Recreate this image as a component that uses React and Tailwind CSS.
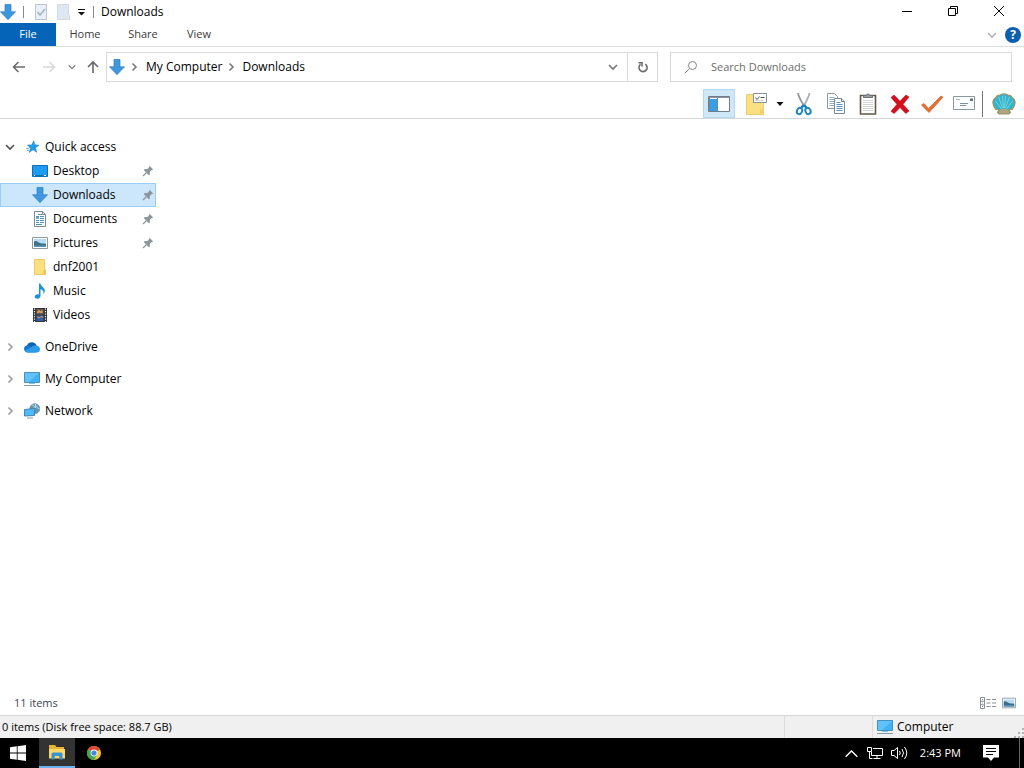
import React, { useState } from 'react';

const DownArrowIcon = ({ className }) => (
  <svg viewBox="0 0 16 16" className={className} aria-hidden="true">
    <path d="M5 .5h6v7.300h4.500L8 15.700.5 7.800H5z" fill="#3f97dd" stroke="#2c7cc0" strokeWidth=".7" />
  </svg>
);

const Chevron = ({ direction = 'right', className }) => {
  const paths = {
    right: 'M3.500 1.500 7 5 3.500 8.500',
    down: 'M1 3l4 4 4-4',
    up: 'M.5 7.500 5 3l4.500 4.500',
  };
  return (
    <svg viewBox="0 0 10 10" className={className} fill="none" stroke="currentColor" aria-hidden="true">
      <path d={paths[direction]} strokeWidth={direction === 'up' ? 1.1 : 1.6} />
    </svg>
  );
};

const MonitorIcon = ({ className }) => (
  <svg viewBox="0 0 16 16" className={className} aria-hidden="true">
    <path d="M.5 1.500h15v10H.5z" fill="#43b2f6" stroke="#4590bd" />
    <path d="M1 2h14L5 11H1z" fill="#62c2fa" />
    <path d="M5 12.500h6" stroke="#7fc3e8" />
    <path d="M0 14.500h16" stroke="#8b9aa5" />
  </svg>
);

const PictureIcon = ({ className }) => (
  <svg viewBox="0 0 16 16" className={className} aria-hidden="true">
    <path d="M.5 2.500h15v11H.5z" fill="#fff" stroke="#8d989f" />
    <path d="M2 4h12v8H2z" fill="#b5dcf2" />
    <path d="M2 6.500c2-1.500 4 .5 6 1.500s4 0 6 1v3H2z" fill="#3f7088" />
    <path d="M2 10.500h12V12H2z" fill="#5796bd" />
  </svg>
);

const PinIcon = () => (
  <svg viewBox="0 0 12 12" className="size-3 text-[#8b959d]" aria-hidden="true">
    <path d="M7.500.8 11.200 4.500l-1.400.4-2 2 .1 2.500-1 .9L1.700 5.100l.9-1 2.500.1 2-2z" fill="currentColor" />
    <path d="M4.500 7.500 1 11" stroke="currentColor" strokeWidth="1.200" />
  </svg>
);

const StarIcon = () => (
  <svg viewBox="0 0 16 16" className="size-4" aria-hidden="true">
    <path d="m8.800 1.800 1 4 4.200.4-3.500 2.600 1.200 4.500-3.700-2.600L4.200 13.500l1.300-4.300L2.500 6l4.100-.1z" fill="#1f9cea" stroke="#2d89c4" strokeWidth=".6" />
    <path d="M1 9.500h3M2 11.500h2" stroke="#69b9ea" />
  </svg>
);

const DesktopIcon = () => (
  <svg viewBox="0 0 16 16" className="size-4" aria-hidden="true">
    <path d="M.5 2.500h15v11H.5z" fill="#1d9bf0" stroke="#0c70b8" />
    <path d="M1 12.500h14" stroke="#0d6fb4" />
    <path d="M2 12.500h1M12 12.500h2" stroke="#fff" />
  </svg>
);

const DocumentIcon = () => (
  <svg viewBox="0 0 16 16" className="size-4" aria-hidden="true">
    <path d="M2.500.5h8l3 3v12h-11z" fill="#fff" stroke="#82898e" />
    <path d="M10.500.5v3h3" fill="none" stroke="#82898e" />
    <path d="M6 3.500h4M4 5.500h3M8 5.500h4M8 7.500h4M4 9.500h3M8 9.500h4M4 11.500h3M8 11.500h4M4 13.500h6" stroke="#4a95b8" />
    <path d="M4 6h3v2H4z" fill="#6aa9c6" />
  </svg>
);

const FolderIcon = () => (
  <svg viewBox="0 0 16 16" className="size-4" aria-hidden="true">
    <path d="M2.500.5h10v9l1 1v5h-11z" fill="#fcdf7e" stroke="#eccb6c" />
    <path d="M11.500 11v4.500h2v-5z" fill="#f0c04c" />
  </svg>
);

const MusicIcon = () => (
  <svg viewBox="0 0 16 16" className="size-4" aria-hidden="true">
    <path d="M7 .5h1.500c.2 3 4.700 4 4.300 7.500-.1 1.300-.7 2.300-1.400 3 .5-2.400-.3-4-2.900-4.700V13c0 1.600-1.500 2.700-3.200 2.700-1.500 0-2.600-.8-2.600-2s1.300-2.400 3-2.400c.5 0 .9.100 1.300.2z" fill="#1a93dc" />
  </svg>
);

const VideoIcon = () => (
  <svg viewBox="0 0 16 16" className="size-4" aria-hidden="true">
    <path d="M1 1h14v14H1z" fill="#30323a" />
    <path d="M2.500 1.500v14M13.500 1.500v14" stroke="#f3f3f3" strokeWidth="1.200" strokeDasharray="1.300 1.200" />
    <path d="M4.500 2h7v5.500h-7z" fill="#6d5a4c" />
    <path d="m5 5 2-2 1.500 1.500L10 3l1 2.500-2 .5-2-.5-2 1z" fill="#e2a55e" />
    <path d="M4.500 8.500h7V14h-7z" fill="#375fa8" />
    <path d="m5 9.500 2 1.500 3-2 1 2" stroke="#d49a55" fill="none" />
  </svg>
);

const CloudIcon = () => (
  <svg viewBox="0 0 16 16" className="size-4" aria-hidden="true">
    <path d="M3 6.500a5.200 5.200 0 0 1 9.700.3L9 11l-6-2z" fill="#0f62b4" />
    <path d="M3.800 13.500C-1 13.500-1.200 6.800 3.200 6.300c1.800-.1 2.800.7 4 1.500L12 13.500z" fill="#1679cf" />
    <path d="M7 8.500c2-2 4-2.300 5.800-1.700 2.100.3 3.200 1.700 3.200 3.400 0 2-1.300 3.300-3.100 3.300H3.500c-1.300 0-2.300-.6-2.800-1.500z" fill="#2b9bea" />
  </svg>
);

const NetworkIcon = () => (
  <svg viewBox="0 0 16 16" className="size-4" aria-hidden="true">
    <circle cx="10.800" cy="5.700" r="5" fill="#6296b4" stroke="#65879b" strokeWidth=".6" />
    <path d="M8 2c2 0 3 1 2 2.500M13 2.500c-1 2 1 3 2.500 3M11.500 1v4" stroke="#b6ddec" fill="none" />
    <path d="m.5 6.500 10-1v7l-10 .5z" fill="#50b9f7" stroke="#3d86b6" />
    <path d="M3 15h6" stroke="#78a4bd" />
  </svg>
);

// Toolbar icons
const PaneIcon = () => (
  <svg viewBox="0 0 24 24" className="size-6" aria-hidden="true">
    <path d="M1.500 4.500h21v15h-21z" fill="#fff" stroke="#707d89" />
    <path d="M1.500 5.500h21" stroke="#8793a0" />
    <path d="M3 7h7v12H3z" fill="#3c9ce6" />
    <path d="M2.500 6v13M10.500 6v13" stroke="#5d8cb2" />
  </svg>
);

const FolderOptionsIcon = () => (
  <svg viewBox="0 0 24 24" className="size-6" aria-hidden="true">
    <path d="M1.500 2.500h10v6h7v14h-17z" fill="#fbe082" stroke="#ebce75" />
    <path d="M15 17.500h4v5h-4z" fill="#f5d067" />
    <path d="M8.500 1.500h13v9h-13z" fill="#fff" stroke="#8b9297" />
    <path d="m10.500 5.500 1.500 2L14.500 4.500M15.500 5.500h4" fill="none" stroke="#5a5a5a" />
    <path d="M10.500 8.500h8" stroke="#d1d5d8" />
  </svg>
);

const CutIcon = () => (
  <svg viewBox="0 0 24 24" className="size-6" fill="none" aria-hidden="true">
    <path d="M6 1c.2 3 3.300 8.500 6.500 13.500" stroke="#8c969e" strokeWidth="1.800" />
    <path d="M17.500 1c-.2 3-3.300 8.500-6 13.500" stroke="#a6afb6" strokeWidth="1.800" />
    <path d="m11.700 13-2.700 3M12 13l2.700 3" stroke="#1a7ebd" strokeWidth="2.500" />
    <ellipse cx="7.500" cy="19" rx="2.500" ry="3.200" transform="rotate(25 7.500 19)" stroke="#1d86c4" strokeWidth="2" />
    <ellipse cx="16" cy="19" rx="2.500" ry="3.200" transform="rotate(-25 16 19)" stroke="#1d86c4" strokeWidth="2" />
  </svg>
);

const CopyIcon = () => (
  <svg viewBox="0 0 24 24" className="size-6" aria-hidden="true">
    <path d="M3.500 1.500h7l3 3v12h-10z" fill="#fff" stroke="#8c979f" />
    <path d="M5.500 5.500h5M5.500 7.500h5M5.500 9.500h5M5.500 11.500h5M5.500 13.500h5" stroke="#8fb1cb" />
    <path d="M10.500 6.500h7l3 3v12h-10z" fill="#fff" stroke="#7a8a99" />
    <path d="M17.500 6.500v3h3" fill="#d8e5ef" stroke="#6c7d8d" />
    <path d="M12.500 10.500h4M12.500 12.500h6M12.500 14.500h6M12.500 16.500h6M12.500 18.500h6" stroke="#5b93c1" />
  </svg>
);

const PasteIcon = () => (
  <svg viewBox="0 0 24 24" className="size-6" aria-hidden="true">
    <path d="M4.500 3.500h15v18.500h-15z" fill="#fff" stroke="#625846" strokeWidth="1.600" />
    <path d="M7 8.500h10M7 10.500h10M7 12.500h10M7 14.500h10M7 16.500h10M7 18.500h10" stroke="#d0d6d9" />
    <path d="M7.500 5.500v-2h3a1.500 1.500 0 0 1 3 0h3v2z" fill="#9aa2a7" stroke="#6a7278" />
  </svg>
);

const DeleteIcon = () => (
  <svg viewBox="0 0 24 24" className="size-6" aria-hidden="true">
    <path d="M3 5.500 6 3l6 6.200L18 3l3 2-6 7.300 6 6.700-3.200 2.500-5.800-6-5.800 6L3 19.300l6-7z" fill="#d4101f" stroke="#b80b18" strokeWidth=".6" />
  </svg>
);

const CheckIcon = () => (
  <svg viewBox="0 0 24 24" className="size-6" aria-hidden="true">
    <path d="m1.500 13 2.500-1.500 4.500 5L21 4l2 1.200L9 20.500z" fill="#ec6f2d" stroke="#c65f2b" strokeWidth=".7" />
  </svg>
);

const MailIcon = () => (
  <svg viewBox="0 0 24 24" className="size-6" aria-hidden="true">
    <path d="M1.500 4.500h21v13h-21z" fill="#fafcfd" stroke="#8b979f" />
    <path d="M4 7.500h4" stroke="#b0bac1" />
    <path d="M18 6.500h3v2.500h-3z" fill="#62747f" />
    <path d="M8 11.500h8M8 13.500h6" stroke="#82909a" />
  </svg>
);

const ShellIcon = () => (
  <svg viewBox="0 0 24 24" className="size-6" aria-hidden="true">
    <path d="M7 17.500H4C-.5 13 .3 7.500 3.500 6c.8-2 2.500-3 4.500-3 2.300-1.500 5.700-1.500 8 0 2 0 3.700 1 4.500 3 3.200 1.500 4 7-.5 11.500h-3l1.500 3-1.500 1.500H7L5.500 20.500z" fill="#35b5cc" stroke="#a98d5f" strokeWidth="1.100" />
    <path d="m9.500 17-6-8M10.500 16l-4-11M11.500 16 10.500 4M12.500 16l1-12M13.500 16l4-11M14.500 17l6-8" stroke="#6ed3dd" fill="none" />
    <path d="M7.500 19c2-3 7-3 9 0l1 1-1 1.500h-9l-1-1.500z" fill="#b8a477" />
  </svg>
);

const quickAccess = [
  { name: 'Desktop', icon: <DesktopIcon />, pinned: true },
  { name: 'Downloads', icon: <DownArrowIcon className="size-4" />, pinned: true },
  { name: 'Documents', icon: <DocumentIcon />, pinned: true },
  { name: 'Pictures', icon: <PictureIcon className="size-4" />, pinned: true },
  { name: 'dnf2001', icon: <FolderIcon /> },
  { name: 'Music', icon: <MusicIcon /> },
  { name: 'Videos', icon: <VideoIcon /> },
];

const roots = [
  { name: 'OneDrive', icon: <CloudIcon /> },
  { name: 'My Computer', icon: <MonitorIcon className="size-4" /> },
  { name: 'Network', icon: <NetworkIcon /> },
];

const tools = [
  { name: 'Cut', icon: <CutIcon /> },
  { name: 'Copy', icon: <CopyIcon /> },
  { name: 'Paste', icon: <PasteIcon /> },
  { name: 'Delete', icon: <DeleteIcon /> },
  { name: 'Rename', icon: <CheckIcon /> },
  { name: 'Properties', icon: <MailIcon /> },
];

const TitleBar = () => (
  <header className="flex h-[23px] items-center">
    <DownArrowIcon className="size-4" />
    <span className="ml-[7px] h-3 w-px bg-[#8a8a8a]" />
    <button aria-label="Properties" className="ml-[9px]">
      <svg viewBox="0 0 16 16" className="size-4">
        <path d="M2.500.5h11v15h-11z" fill="#e9f0f7" stroke="#bcc5ce" />
        <path d="m4.500 8 2.500 3 5-6" fill="none" stroke="#a0b4ca" strokeWidth="1.600" />
      </svg>
    </button>
    <button aria-label="New folder" className="ml-[7px]">
      <svg viewBox="0 0 16 16" className="size-4">
        <path d="M1.500.5h11v10l1 1v4h-12z" fill="#dfe8f0" stroke="#d0dae4" />
      </svg>
    </button>
    <button aria-label="Customize Quick Access Toolbar" className="ml-1">
      <svg viewBox="0 0 12 12" className="size-3">
        <path d="M2 3.500h7" stroke="#111" />
        <path d="M2 6h7L5.500 9.500z" fill="#111" />
      </svg>
    </button>
    <span className="ml-[5px] h-3 w-px bg-[#8a8a8a]" />
    <h1 className="ml-[7px]">Downloads</h1>
    <div className="ml-auto flex h-full items-center pr-[2px] pb-[2px]">
      <button aria-label="Minimize" className="flex w-[46px] justify-center">
        <svg viewBox="0 0 10 10" className="size-[10px]"><path d="M0 5.500h10" stroke="#000" /></svg>
      </button>
      <button aria-label="Restore" className="flex w-[46px] justify-center">
        <svg viewBox="0 0 10 10" className="size-[10px]" fill="none" stroke="#000">
          <path d="M.5 2.500h7v7h-7zM2.500 2.500v-2h7v7h-2" />
        </svg>
      </button>
      <button aria-label="Close" className="flex w-[46px] justify-center">
        <svg viewBox="0 0 10 10" className="size-[10px]" stroke="#000"><path d="m0 0 10 10M10 0 0 10" /></svg>
      </button>
    </div>
  </header>
);

const Ribbon = () => (
  <nav className="flex h-6 items-stretch border-b border-[#dcdddd] text-[11px] text-[#3b3b3b]">
    <button className="w-14 bg-[#0563b8] text-white">File</button>
    <button className="w-[58px]">Home</button>
    <button className="w-[58px]">Share</button>
    <button className="w-[54px]">View</button>
    <div className="ml-auto flex items-center gap-2 pr-[3px]">
      <button aria-label="Expand the Ribbon"><Chevron direction="down" className="size-[10px] text-[#b3b3b3]" /></button>
      <button aria-label="Help" className="flex size-4 items-center justify-center rounded-full bg-[#0c5eb0] text-xs font-bold text-white">
        ?
      </button>
    </div>
  </nav>
);

const AddressRow = () => (
  <div className="flex items-center pt-[5px] pr-3 text-[#6a6a6a]">
    <div className="flex w-[106px] shrink-0 items-center pl-3">
      <button aria-label="Back">
        <svg viewBox="0 0 14 14" className="size-[14px]" fill="none" stroke="currentColor" strokeWidth="1.600"><path d="M6.500 2 1.500 7l5 5M1.500 7H13" /></svg>
      </button>
      <button aria-label="Forward" className="ml-4 text-[#d8d8d8]">
        <svg viewBox="0 0 14 14" className="size-[14px]" fill="none" stroke="currentColor" strokeWidth="1.600"><path d="m7.500 2 5 5-5 5M12.500 7H1" /></svg>
      </button>
      <button aria-label="Recent locations" className="ml-3">
        <Chevron direction="down" className="size-2 text-[#7a7a7a]" />
      </button>
      <button aria-label="Up" className="ml-[10px]">
        <svg viewBox="0 0 14 14" className="size-[14px]" fill="none" stroke="currentColor" strokeWidth="1.600"><path d="m2 7 5-5 5 5M7 2v11" /></svg>
      </button>
    </div>
    <div className="flex h-[30px] flex-1 items-center border border-[#d9d9d9] text-black">
      <DownArrowIcon className="ml-[2px] size-4" />
      <Chevron className="ml-1 size-[10px] text-[#7a7a7a]" />
      <button className="ml-[7px]">My Computer</button>
      <Chevron className="ml-1 size-[10px] text-[#7a7a7a]" />
      <button className="ml-[6px]">Downloads</button>
      <button aria-label="Previous locations" className="ml-auto px-[9px]">
        <Chevron direction="down" className="size-[10px] text-[#757575]" />
      </button>
      <button aria-label="Refresh" className="flex h-full w-[30px] items-center justify-center border-l border-[#d9d9d9] text-[#6c6c6c]">
        <svg viewBox="0 0 12 12" className="size-3" fill="none" stroke="currentColor" strokeWidth="1.600">
          <path d="M8.300 3.100A4.100 4.100 0 1 1 3.500 3.300" />
          <path d="M1.500 1.800H5V5.500" />
        </svg>
      </button>
    </div>
    <label className="ml-3 flex h-[30px] w-[342px] items-center border border-[#d9d9d9] pl-[13px]">
      <svg viewBox="0 0 14 14" className="size-[14px]" fill="none" stroke="#858585">
        <circle cx="8.500" cy="5.500" r="4" />
        <path d="M5.600 8.400.8 13.200" />
      </svg>
      <input
        type="search"
        aria-label="Search Downloads"
        placeholder="Search Downloads"
        className="ml-[13px] min-w-0 flex-1 text-[11px] outline-none placeholder:text-[#6d6d6d]"
      />
    </label>
  </div>
);

const Toolbar = () => (
  <div role="toolbar" className="mt-[7px] flex h-[30px] items-center justify-end border-b border-[#d5d8da] pr-2">
    <button aria-label="Navigation pane" className="mr-1 flex h-[29px] w-8 items-center justify-center border border-[#b4d8f1] bg-[#d0e7f8]">
      <PaneIcon />
    </button>
    <button aria-label="Folder options" className="flex w-[33px] items-center pl-[6px]"><FolderOptionsIcon /></button>
    <button aria-label="More folder options" className="flex w-4 justify-center">
      <svg viewBox="0 0 8 8" className="size-2"><path d="M.5 2h7L4 6z" fill="#111" /></svg>
    </button>
    {tools.map((tool) => (
      <button key={tool.name} aria-label={tool.name} className="flex w-8 justify-center">{tool.icon}</button>
    ))}
    <span className="ml-[2px] h-[26px] w-px bg-[#777]" />
    <button aria-label="Classic Shell" className="ml-[9px]"><ShellIcon /></button>
  </div>
);

const Sidebar = ({ selected, onSelect }) => (
  <aside className="w-[156px] shrink-0 pt-4">
    <button className="flex h-6 w-full items-center pl-[5px]">
      <Chevron direction="down" className="size-[10px] text-[#505050]" />
      <span className="ml-[10px]"><StarIcon /></span>
      <span className="ml-1">Quick access</span>
    </button>
    <ul>
      {quickAccess.map((item) => (
        <li key={item.name}>
          <button
            onClick={() => onSelect(item.name)}
            className={`flex h-6 w-full items-center border pr-px pl-[31px] ${
              selected === item.name ? 'border-[#99cdf5] bg-[#cce7fc]' : 'border-transparent'
            }`}
          >
            {item.icon}
            <span className="mr-auto ml-[5px]">{item.name}</span>
            {item.pinned && <PinIcon />}
          </button>
        </li>
      ))}
    </ul>
    <ul className="mt-2 flex flex-col gap-2">
      {roots.map((item) => (
        <li key={item.name}>
          <button className="flex h-6 w-full items-center pl-[5px]">
            <Chevron className="size-[10px] text-[#9b9b9b]" />
            <span className="ml-[9px]">{item.icon}</span>
            <span className="ml-[5px]">{item.name}</span>
          </button>
        </li>
      ))}
    </ul>
  </aside>
);

const StatusBars = () => (
  <footer>
    <div className="flex h-6 items-center pr-2 pl-[14px] text-[#3b4652]">
      <span className="text-[11px]">11 items</span>
      <button aria-label="Details view" className="ml-auto">
        <svg viewBox="0 0 16 12" className="h-3 w-4" fill="none" stroke="#8a9095">
          <path d="M.5.5h4v11h-4zM.5 4.200h4M.5 7.800h4M2 2.500h1M2 6h1M2 9.500h1" />
          <path d="M6.500 2.500h4M12 2.500h4M6.500 6h4M12 6h4M6.500 9.500h4M12 9.500h4" />
        </svg>
      </button>
      <button aria-label="Large icons view" className="ml-[6px]"><PictureIcon className="size-[14px]" /></button>
    </div>
    <div className="flex h-[23px] items-center border-t border-[#d7d7d7] bg-[#f0f0f0] pl-[2px] text-black">
      <span className="pt-px text-[11px]">0 items (Disk free space: 88.7 GB)</span>
      <span className="ml-auto h-full w-[88px] border-l border-[#dcdcdc]" />
      <span className="flex h-full w-[152px] items-center gap-1 border-l border-[#dcdcdc] pl-1">
        <MonitorIcon className="size-4" />
        Computer
        <svg viewBox="0 0 10 10" className="mt-3 ml-auto size-[10px]" fill="#b4b4b4" aria-hidden="true">
          <path d="M8 0h2v2H8zM4 4h2v2H4zM8 4h2v2H8zM0 8h2v2H0zM4 8h2v2H4zM8 8h2v2H8z" />
        </svg>
      </span>
    </div>
  </footer>
);

const Taskbar = () => (
  <div className="flex h-[30px] items-center bg-black text-white">
    <button aria-label="Start" className="flex w-[39px] justify-center pr-[3px]">
      <svg viewBox="0 0 16 16" className="size-4" fill="#fff">
        <path d="M0 2.300 6.800 1.300v6.300H0zM7.600 1.200 16 0v7.600H7.600zM0 8.400h6.800v6.300L0 13.700zM7.600 8.400H16V16l-8.400-1.200z" />
      </svg>
    </button>
    <button aria-label="File Explorer" className="flex h-full w-9 items-center justify-center border-b-2 border-[#6cb2ee] bg-[#333]">
      <svg viewBox="0 0 18 16" className="h-4 w-[18px]">
        <path d="M1 1h6l1.500 2H16v11H1z" fill="#e9b33a" />
        <path d="M1 5h16v9.500H1z" fill="#fbd968" />
        <path d="M3.500 15.500V10q0-1.500 1.500-1.500h8q1.500 0 1.500 1.500v5.500h-3.300V12H6.800v3.500z" fill="#3b93cd" />
      </svg>
    </button>
    <button aria-label="Google Chrome" className="ml-3">
      <svg viewBox="0 0 14 14" className="size-[14px]">
        <circle cx="7" cy="7" r="7" fill="#f6c92f" />
        <path d="M7 7 .9 3.500A7 7 0 0 1 13 3.500z" fill="#e0483b" />
        <path d="M.9 3.500A7 7 0 0 0 7 14l3-5.300L7 7z" fill="#3fa757" />
        <circle cx="7" cy="7" r="3.400" fill="#fff" />
        <circle cx="7" cy="7" r="2.600" fill="#4684e8" />
      </svg>
    </button>
    <div className="ml-auto flex h-full items-center">
      <button aria-label="Show hidden icons"><Chevron direction="up" className="size-[13px]" /></button>
      <button aria-label="Network status" className="ml-[9px]">
        <svg viewBox="0 0 16 16" className="size-4" fill="none" stroke="#fff">
          <path d="M6 3.500h9.500v7H4.500V7M10 10.500v3M6.500 13.500h7M.5 2.500h4v4h-4zM2.500 6.500v7h3" />
        </svg>
      </button>
      <button aria-label="Volume" className="ml-2">
        <svg viewBox="0 0 17 16" className="h-4 w-[17px]" fill="none" stroke="#fff">
          <path d="M.5 5.500h2.500l3.500-3v11L3 10.500H.5z" />
          <path d="M8.500 6q1.500 2 0 4M11 4q3 4 0 8M13.500 2q4.500 6 0 12" />
        </svg>
      </button>
      <time className="ml-3 text-[11px]">2:43 PM</time>
      <button aria-label="Notifications" className="mr-5 ml-[22px]">
        <svg viewBox="0 0 16 16" className="size-4">
          <path d="M0 0h16v12.500h-5L8 16l-3-3.500H0z" fill="#fff" />
          <path d="M3 3.500h10M3 6.500h10M3 9.500h7" stroke="#000" />
        </svg>
      </button>
      <button aria-label="Show desktop" className="h-full w-[5px] border-l border-[#666]" />
    </div>
  </div>
);

const App = () => {
  const [selected, setSelected] = useState('Downloads');

  return (
    <div className="flex min-h-screen flex-col bg-white font-['Open_Sans','Noto_Sans',sans-serif] text-xs text-black">
      <TitleBar />
      <Ribbon />
      <AddressRow />
      <Toolbar />
      <div className="flex flex-1">
        <Sidebar selected={selected} onSelect={setSelected} />
        <main className="flex-1" aria-label={selected} />
      </div>
      <StatusBars />
      <Taskbar />
    </div>
  );
};

export default App;
